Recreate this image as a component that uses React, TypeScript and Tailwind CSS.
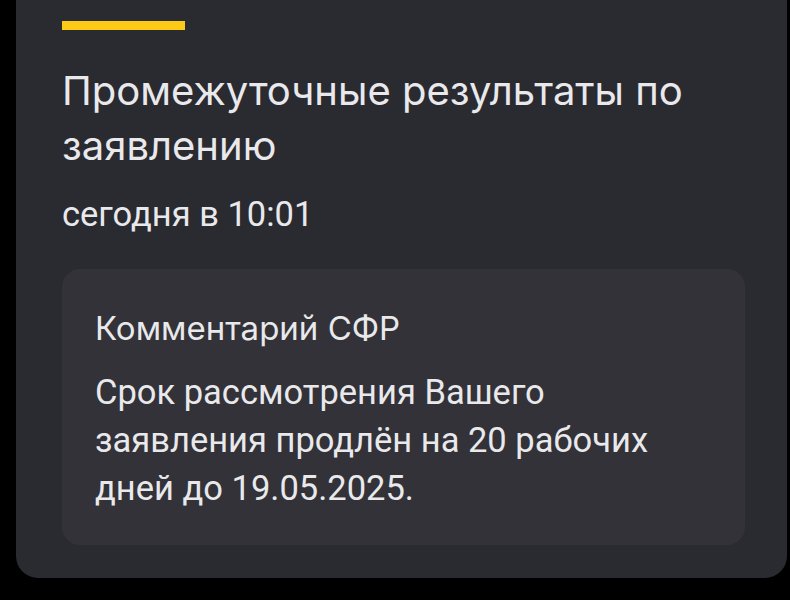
import React from 'react';

export default function App() {
  return (
    <div className="min-h-[600px] w-[790px] bg-black pr-[3px] pl-[16px] pb-[24px] font-['Roboto',sans-serif]">
      <div className="rounded-b-[22px] bg-[#2a2a31] pl-[46px] pr-[42px] pt-[21px] pb-[33px]">
        {/* Жёлтая полоска */}
        <div className="h-[9px] w-[123px] bg-[#fbc916]" />

        <h1 className="mt-[33px] font-['Inter',sans-serif] text-[40px] leading-[55px] font-normal text-[#e9e9ec]">
          Промежуточные результаты по заявлению
        </h1>
        <p className="mt-[21px] text-[34.5px] leading-[40px] text-[#e9e9ec]">сегодня в 10:01</p>

        {/* Комментарий */}
        <div className="mt-[35px] rounded-[18px] bg-[#323238] px-[33px] pt-[39px] pb-[33px]">
          <h3 className="font-['Inter',sans-serif] text-[33px] leading-[40px] text-[#e9e9ec]">Комментарий СФР</h3>
          <p className="mt-[20px] text-[34.5px] leading-[48px] text-[#e9e9ec]">
            Срок рассмотрения Вашего
            <br />
            заявления продлён на 20 рабочих
            <br />
            дней до 19.05.2025.
          </p>
        </div>
      </div>
    </div>
  );
}
